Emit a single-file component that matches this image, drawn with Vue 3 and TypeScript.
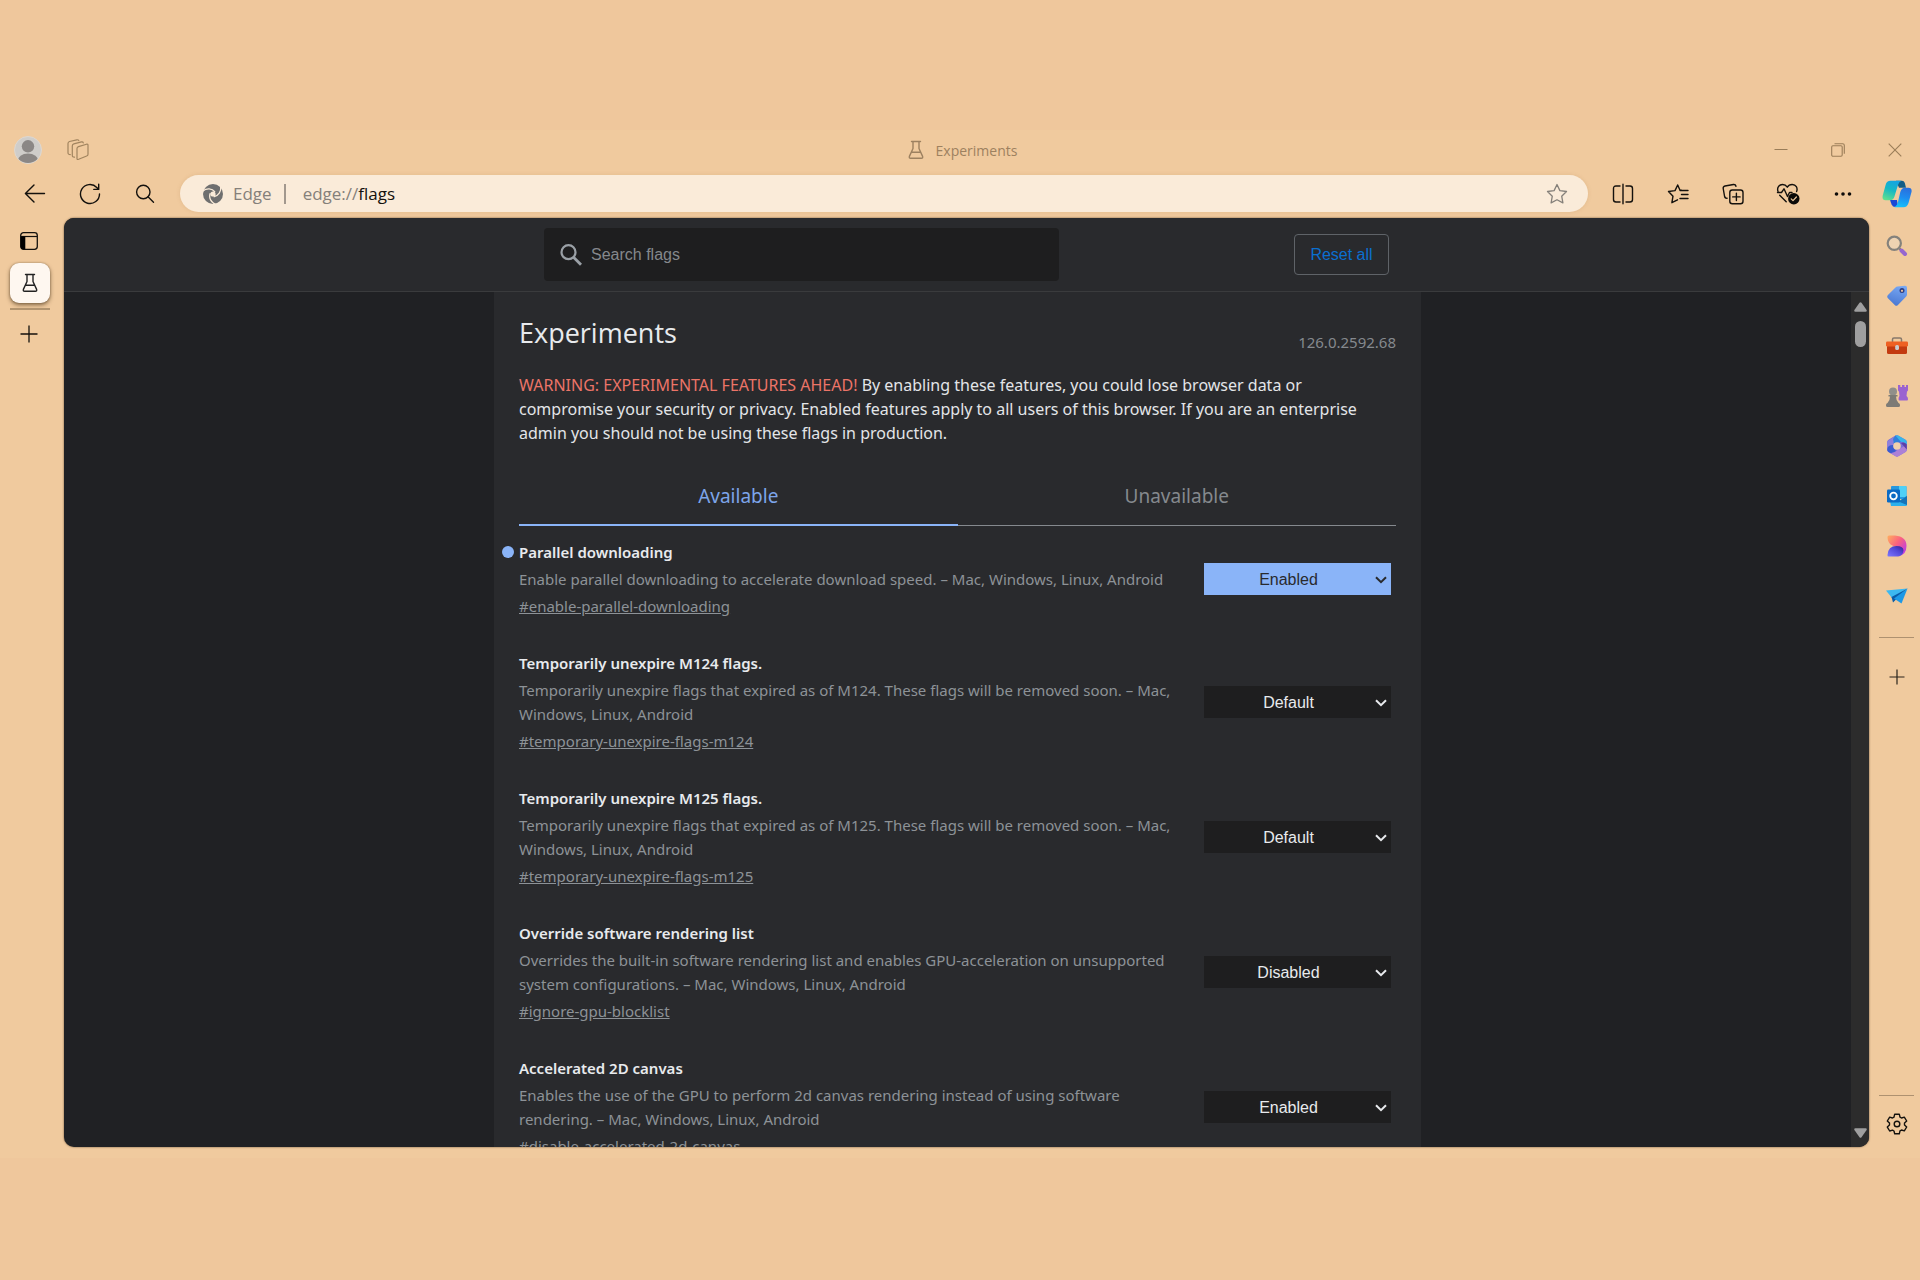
<script setup lang="ts">
import { ref } from 'vue'

type State = 'Default' | 'Enabled' | 'Disabled'

interface Flag {
  id: string
  title: string
  description: string
  state: State
  modified?: boolean
}

const states: State[] = ['Default', 'Enabled', 'Disabled']

const flags = ref<Flag[]>([
  {
    id: 'enable-parallel-downloading',
    title: 'Parallel downloading',
    description: 'Enable parallel downloading to accelerate download speed. – Mac, Windows, Linux, Android',
    state: 'Enabled',
    modified: true,
  },
  {
    id: 'temporary-unexpire-flags-m124',
    title: 'Temporarily unexpire M124 flags.',
    description: 'Temporarily unexpire flags that expired as of M124. These flags will be removed soon. – Mac, Windows, Linux, Android',
    state: 'Default',
  },
  {
    id: 'temporary-unexpire-flags-m125',
    title: 'Temporarily unexpire M125 flags.',
    description: 'Temporarily unexpire flags that expired as of M125. These flags will be removed soon. – Mac, Windows, Linux, Android',
    state: 'Default',
  },
  {
    id: 'ignore-gpu-blocklist',
    title: 'Override software rendering list',
    description: 'Overrides the built-in software rendering list and enables GPU-acceleration on unsupported system configurations. – Mac, Windows, Linux, Android',
    state: 'Disabled',
  },
  {
    id: 'disable-accelerated-2d-canvas',
    title: 'Accelerated 2D canvas',
    description: 'Enables the use of the GPU to perform 2d canvas rendering instead of using software rendering. – Mac, Windows, Linux, Android',
    state: 'Enabled',
  },
])

const query = ref('')
const tab = ref<'available' | 'unavailable'>('available')
</script>

<template>
  <div class="desktop">
    <div class="window">
      <header class="titlebar">
        <div class="title-left">
          <button class="plain" aria-label="Profile">
            <svg width="28" height="28" viewBox="0 0 28 28">
              <defs><clipPath id="avatar"><circle cx="14" cy="14" r="13" /></clipPath></defs>
              <circle cx="14" cy="14" r="13.5" fill="#cfcdca" stroke="#dfd8cf" />
              <g clip-path="url(#avatar)" fill="#8b8785">
                <circle cx="14" cy="10.300" r="6.200" />
                <ellipse cx="14" cy="25.500" rx="10.500" ry="8" />
              </g>
            </svg>
          </button>
          <button class="plain" aria-label="Workspaces">
            <svg width="22" height="22" viewBox="0 0 22 22" fill="none" stroke="#a1845f" stroke-width="1.200" stroke-linejoin="round" stroke-linecap="round">
              <path d="M11.500 7.600 19.500 5.200Q21 4.900 21 6.300V15.200Q21 16.600 19.700 17L11.600 20.300Q10 20.900 10 19.400V9.600Q10 8.100 11.500 7.600Z" />
              <path d="M7.500 18.200Q5.300 18.300 5.300 16.600V7Q5.300 5.400 6.800 4.900L14.500 2.900Q16 2.600 16.300 3.800" />
              <path d="M3.300 15.600Q1 15.600 1 13.800V4.500Q1 3 2.500 2.500L9.800.800Q11.300.500 11.800 1.500" />
            </svg>
          </button>
        </div>
        <div class="title-center">
          <svg width="16" height="20" viewBox="0 0 16 20" fill="none" stroke="#9d8160" stroke-width="1.400" stroke-linecap="round" stroke-linejoin="round">
            <path d="M3.500 1.500h9M5 1.500v7L1.400 16.400Q.900 18.300 2.600 18.300H13.400Q15.100 18.300 14.600 16.400L11 8.500v-7M3.600 12.300h8.800" />
          </svg>
          <span>Experiments</span>
        </div>
        <div class="title-right">
          <button class="plain" aria-label="Minimize">
            <svg width="14" height="14" viewBox="0 0 14 14"><path d="M.500 6.500h13" stroke="#9a7d58" /></svg>
          </button>
          <button class="plain" aria-label="Restore">
            <svg width="14" height="14" viewBox="0 0 14 14" fill="none" stroke="#9a7d58" stroke-width="1.100">
              <rect x=".700" y="2.800" width="10.500" height="10.500" rx="1.200" /><path d="M3.500.700h8.200q1.600 0 1.600 1.600v8.500" />
            </svg>
          </button>
          <button class="plain" aria-label="Close">
            <svg width="14" height="14" viewBox="0 0 14 14"><path d="M.700.700l12.600 12.600M13.300.700.700 13.300" stroke="#9a7d58" stroke-width="1.100" /></svg>
          </button>
        </div>
      </header>

      <div class="toolbar">
        <button class="tool" aria-label="Back">
          <svg width="22" height="22" viewBox="0 0 22 22" class="line"><path d="M20.500 10.500H1.500M10 2 1.400 10.500 10 19" /></svg>
        </button>
        <button class="tool" aria-label="Refresh">
          <svg width="22" height="22" viewBox="0 0 22 22" class="line"><path d="M20.500 11A9.500 9.500 0 1 1 17.800 4.400L19.500 6.200M19.700 1.300V6.400H14.800" /></svg>
        </button>
        <button class="tool" aria-label="Search">
          <svg width="20" height="20" viewBox="0 0 20 20" class="line"><circle cx="8.300" cy="8" r="6.700" /><path d="M13 12.800 18.500 18.300" /></svg>
        </button>
        <div class="omnibox">
          <svg width="20" height="20" viewBox="0 0 20 20">
            <circle cx="10" cy="10" r="10" fill="#6f6f6f" />
            <g fill="none" stroke="#faebd9" stroke-width="1.300">
              <path d="M-.500 7.200C3.500 4 9 4.200 12 8" />
              <path d="M-.500 7.200C3.500 4 9 4.200 12 8" transform="rotate(120 10 10)" />
              <path d="M-.500 7.200C3.500 4 9 4.200 12 8" transform="rotate(240 10 10)" />
            </g>
            <circle cx="10" cy="10" r="2.600" fill="#faebd9" />
          </svg>
          <span class="site">Edge</span>
          <span class="bar"></span>
          <span class="url">edge://<b>flags</b></span>
          <button class="plain star" aria-label="Add to favorites">
            <svg width="22" height="22" viewBox="0 0 22 22" fill="none" stroke="#85807a" stroke-width="1.300" stroke-linejoin="round">
              <path d="M11 1.500 13.900 7.600 20.500 8.500 15.700 13.200 16.900 19.900 11 16.700 5.100 19.900 6.300 13.200 1.500 8.500 8.100 7.600Z" />
            </svg>
          </button>
        </div>
        <button class="tool" aria-label="Split screen">
          <svg width="22" height="22" viewBox="0 0 22 22" class="line"><path d="M8 3H4Q1.500 3 1.500 5.500v11Q1.500 19 4 19H8M14 3h4q2.500 0 2.500 2.500v11Q20.500 19 18 19H14M11 1.200v19.600" /></svg>
        </button>
        <button class="tool" aria-label="Favorites">
          <svg width="22" height="22" viewBox="0 0 22 22" class="line"><path d="M14.500 7.200 12.900 7 10.700 2 8 7.600 1.500 8.500 6 13.200 4.900 19.700 10.500 16.800M13 7.500h8M14.500 11.500H21M13 15.500h8" /></svg>
        </button>
        <button class="tool" aria-label="Collections">
          <svg width="22" height="22" viewBox="0 0 22 22" class="line"><path d="M5 15.300 3.800 15Q2.800 14.500 2.600 13.500L1.200 5.500Q1 3.500 3 3L11.500 1.500Q13.500 1.300 14 3.200" /><rect x="7.800" y="7" width="13.200" height="13.700" rx="2.500" /><path d="M14.400 10.200v7.400M10.700 13.900h7.400" /></svg>
        </button>
        <button class="tool" aria-label="Browser essentials">
          <svg width="24" height="22" viewBox="0 0 24 22" class="line"><path d="M2 8.500C.600 4 3.500 1.500 6.500 1.500 9 1.500 10.500 3 11.300 4.200 12 3 13.700 1.500 16.200 1.500 20 1.500 22 5 20.600 8.500M1.500 9.500h4L8 5.800 11.500 13.500 13.500 9.500H16M3.700 12.300 10.200 18.800" /><circle cx="17.800" cy="15.700" r="5.700" fill="#0b0a08" stroke="none" /><path d="M15.200 15.900 17 17.600 20.400 14" stroke="#f0ca9e" stroke-width="1.200" /></svg>
        </button>
        <button class="tool" aria-label="Settings and more">
          <svg width="18" height="6" viewBox="0 0 18 6" fill="#0e0c0a"><circle cx="2.500" cy="3" r="1.800" /><circle cx="9" cy="3" r="1.800" /><circle cx="15.500" cy="3" r="1.800" /></svg>
        </button>
        <button class="tool copilot" aria-label="Copilot">
          <svg width="30" height="28" viewBox="0 0 30 28">
            <defs>
              <linearGradient id="cpA" x1=".6" y1="0" x2=".2" y2="1"><stop offset="0" stop-color="#13a4e2" /><stop offset=".45" stop-color="#15b8c4" /><stop offset="1" stop-color="#63e08c" /></linearGradient>
              <linearGradient id="cpB" x1=".6" y1="0" x2=".4" y2="1"><stop offset="0" stop-color="#2b6fdc" /><stop offset=".5" stop-color="#1d8df0" /><stop offset="1" stop-color="#17c0fa" /></linearGradient>
            </defs>
            <path d="M14 .800h6Q22 .800 22.800 3L24 7.800H17Z" fill="#135d86" />
            <path d="M8 20h7l1 7h-2.500Q10.500 27 9.600 24.500Z" fill="#1848d6" />
            <path d="M8.500.800H19.500Q17 1.500 16 5L12.300 17Q11 20.300 8 20.300H3.500Q0 20.300 .600 16L3.600 5Q4.700 .800 8.500.800Z" fill="url(#cpA)" />
            <path d="M21.500 27.200H12.500Q15 26 16 22L18.300 12Q19.500 7.700 23 7.700H26.500Q30.300 7.700 29.500 12L26.500 23Q25.300 27.200 21.500 27.200Z" fill="url(#cpB)" />
          </svg>
        </button>
      </div>

      <div class="body">
        <nav class="rail-left" aria-label="Tabs">
          <button class="plain narrow" aria-label="Tab actions">
            <svg width="18" height="18" viewBox="0 0 18 18"><rect x=".700" y=".700" width="16.600" height="16.600" rx="2.800" fill="none" stroke="#14110d" stroke-width="1.300" /><path d="M1 4.500H17" stroke="#14110d" stroke-width="1.200" /><path d="M.700 4.500h4.600v12.800H3q-2.300 0-2.300-2.300z" fill="#000" /></svg>
          </button>
          <button class="tab-tile" aria-label="Experiments">
            <svg width="16" height="20" viewBox="0 0 16 20" fill="none" stroke="#222" stroke-width="1.400" stroke-linecap="round" stroke-linejoin="round">
              <path d="M3.500 1.500h9M5 1.500v7L1.400 16.400Q.900 18.300 2.600 18.300H13.400Q15.100 18.300 14.600 16.400L11 8.500v-7M3.600 12.300h8.800" />
            </svg>
          </button>
          <span class="rail-rule"></span>
          <button class="plain narrow" aria-label="New tab">
            <svg width="18" height="18" viewBox="0 0 18 18"><path d="M9 .500v17M.500 9h17" stroke="#14110d" stroke-width="1.300" /></svg>
          </button>
        </nav>

        <main class="page">
          <div class="page-head">
            <div class="head-inner">
              <label class="search">
                <svg width="24" height="24" viewBox="0 0 24 24" fill="none" stroke="#9aa0a6" stroke-width="2.200"><circle cx="9.500" cy="9.200" r="7" /><path d="M14.500 14.200 22 21.700" stroke-width="2.800" /></svg>
                <input v-model="query" type="text" placeholder="Search flags" aria-label="Search flags" />
              </label>
              <button class="reset">Reset all</button>
            </div>
          </div>
          <div class="scroll">
            <div class="gutter">
              <div class="column">
                <div class="heading">
                  <h1>Experiments</h1>
                  <span class="version">126.0.2592.68</span>
                </div>
                <p class="blurb">
                  <span class="warning">WARNING: EXPERIMENTAL FEATURES AHEAD!</span> By enabling these features, you could lose browser data or<br>compromise your security or privacy. Enabled features apply to all users of this browser. If you are an enterprise<br>admin you should not be using these flags in production.
                </p>
                <div class="tabs" role="tablist">
                  <button role="tab" :aria-selected="tab === 'available'" :class="{ active: tab === 'available' }" @click="tab = 'available'">Available</button>
                  <button role="tab" :aria-selected="tab === 'unavailable'" :class="{ active: tab === 'unavailable' }" @click="tab = 'unavailable'">Unavailable</button>
                </div>
                <section v-for="flag in flags" :key="flag.id" class="flag" :class="{ modified: flag.modified }">
                  <div class="info">
                    <h2><label :for="flag.id">{{ flag.title }}</label></h2>
                    <p>{{ flag.description }}</p>
                    <a :href="'#' + flag.id">#{{ flag.id }}</a>
                  </div>
                  <div class="choice">
                    <select :id="flag.id" v-model="flag.state">
                      <option v-for="s in states" :key="s">{{ s }}</option>
                    </select>
                    <svg width="12" height="8" viewBox="0 0 12 8" fill="none" stroke="currentColor" stroke-width="2"><path d="M1 1.200 6 6.200 11 1.200" /></svg>
                  </div>
                </section>
              </div>
            </div>
            <div class="scrollbar">
              <svg width="13" height="10" viewBox="0 0 13 10"><path d="M5.500.800Q6.500-.200 7.500.800L12.600 8Q13.200 9.600 11.600 9.700H1.400Q-.200 9.600.400 8Z" fill="#9f9f9f" /></svg>
              <span class="thumb"></span>
              <svg width="13" height="10" viewBox="0 0 13 10"><path d="M5.500 9.200Q6.500 10.200 7.500 9.200L12.600 2Q13.200.400 11.600.300H1.400Q-.200.400.400 2Z" fill="#9f9f9f" /></svg>
            </div>
          </div>
        </main>

        <aside class="rail-right" aria-label="Sidebar">
          <button class="app" aria-label="Search">
            <svg width="22" height="22" viewBox="0 0 22 22"><path d="M13.500 13.500 16 16" stroke="#77736e" stroke-width="2" /><circle cx="8.300" cy="8.300" r="6.600" fill="#eed3b2" stroke="#85827c" stroke-width="2.200" /><path d="M15.500 15.500 19 19" stroke="#9666cf" stroke-width="4" stroke-linecap="round" /></svg>
          </button>
          <button class="app" aria-label="Shopping">
            <svg width="22" height="22" viewBox="0 0 22 22"><defs><linearGradient id="tag" x1=".7" y1="0" x2=".4" y2="1"><stop offset="0" stop-color="#78a8f4" /><stop offset="1" stop-color="#4a78d2" /></linearGradient></defs><path d="M11.500 1.500 19 .800Q21 .800 21 2.800V9.500Q21 10.700 20.200 11.500L11.700 20.300Q10.300 21.400 9 20.300L1.700 13Q.600 11.700 1.700 10.300L9.500 2.500Q10.300 1.600 11.500 1.500Z" fill="url(#tag)" /><circle cx="16" cy="5.500" r="2.500" fill="#2e3f83" /><circle cx="16" cy="5.800" r="1.100" fill="#edc7a4" /></svg>
          </button>
          <button class="app" aria-label="Tools">
            <svg width="22" height="20" viewBox="0 2 22 18"><path d="M6.500 7V4.500Q6.500 3 8 3h6Q15.500 3 15.500 4.500V7" fill="none" stroke="#87786b" stroke-width="1.500" /><rect x="1" y="10" width="20" height="9" rx="1.500" fill="#c33a10" /><rect x="0" y="6.500" width="22" height="5" rx="1.300" fill="#ee6023" /><rect x="9.200" y="10" width="3.800" height="5" rx="1.600" fill="#c9ccd0" /></svg>
          </button>
          <button class="app" aria-label="Games">
            <svg width="22" height="24" viewBox="0 0 22 24"><path d="M12 1h2.300v2H16V1h2.500v2H20V1h2v5q0 1-1 1.500L20.500 12q1.500 1 1.500 3 0 1.500-1 1.500H13.500q-1 0-1-1.500 0-1.800 1-3L13 7.500q-1-.500-1-1.500Z" fill="#9a63d0" /><circle cx="7" cy="7.500" r="4" fill="#918f8a" /><path d="M2.500 11h9v1.500H10q0 4 2.500 6.500 1.500.500 1.500 2v.500q0 1.500-1.500 1.500H1.500Q0 23 0 21.500V21q0-1.500 1.500-2Q4 16.500 4 12.500H2.500Z" fill="#7d7b76" /></svg>
          </button>
          <button class="app" aria-label="Microsoft 365">
            <svg width="22" height="22" viewBox="0 0 22 22">
              <path d="M11.500.300 19.500 4.700Q20.800 5.500 20.800 7V14.800Q20.800 16.300 19.500 17L12.300 21.300Q11 22 9.700 21.300L2.500 17Q1.200 16.300 1.200 14.800V7Q1.200 5.500 2.500 4.700L9.500.600Q10.500 0 11.500.300Z" fill="#7a6ed8" />
              <path d="M7 2.500 1.200 6.500V15L7.500 11V7.500L11 .200Z" fill="#8f7fdb" />
              <path d="M9.500.600Q11-.200 12.300.600L19.500 4.700Q20.800 5.500 20.800 7V10Q18 6.500 14 6.700L7.500 8Z" fill="#38b4ea" />
              <path d="M7 4 9.500.600 15 7 8 8.500Z" fill="#2f7fdc" />
              <path d="M1.200 14.800Q1.200 10 7 10L9 15 12 17 6 19 2.500 17Q1.200 16.300 1.200 14.800Z" fill="#3b5cd0" />
              <path d="M4.500 18.200Q9 17.500 14 13.500L20.800 10V14.800Q20.800 16.300 19.500 17L12.300 21.300Q11 22 9.700 21.300Z" fill="#ac80d6" />
              <path d="M15 8 20.800 14.500V9.500Q18.500 6.500 15 8Z" fill="#5b3fa8" />
              <circle cx="11" cy="11" r="3.800" fill="#f0d0ac" />
            </svg>
          </button>
          <button class="app" aria-label="Outlook">
            <svg width="22" height="22" viewBox="0 0 22 22"><rect x="5" y="1" width="15.500" height="13" rx="1" fill="#2798df" /><path d="M13 1h6.500q1 0 1 1v10H13Z" fill="#4fd0f6" /><path d="M3 11 12.500 16.500 21 10.500V20q0 1-1 1H5Z" fill="#2bb0ec" /><path d="M12.500 16.500 21 11v9Z" fill="#1573b8" /><rect x="1" y="4.500" width="13" height="13" rx="1.300" fill="#0a6ac4" /><circle cx="7.500" cy="11" r="3.300" fill="none" stroke="#fff" stroke-width="1.800" /></svg>
          </button>
          <button class="app" aria-label="Image Creator">
            <svg width="22" height="22" viewBox="0 0 22 22"><defs><linearGradient id="dsA" x1="0" y1="0" x2="1" y2=".8"><stop offset="0" stop-color="#ffae5e" /><stop offset=".5" stop-color="#fb617f" /><stop offset="1" stop-color="#b837f0" /></linearGradient><linearGradient id="dsB" x1="0" y1="1" x2="1" y2="0"><stop offset="0" stop-color="#7d78ff" /><stop offset=".6" stop-color="#5146d6" /><stop offset="1" stop-color="#352088" /></linearGradient></defs><path d="M1.500 2Q1.500.500 3 .500H9Q20.500 1.500 20.500 11T11.500 21.500L14 12Q1.500 12 1.500 2Z" fill="url(#dsA)" /><path d="M2.500 21.500q-1.200 0-1-1.500Q2 11 10.500 11 17.500 11 17.500 15.500 17 21.500 10.500 21.500Z" fill="url(#dsB)" /></svg>
          </button>
          <button class="app" aria-label="Drop">
            <svg width="22" height="22" viewBox="0 0 22 22"><path d="M0 5.500 21.500 3.500 6 13Z" fill="#3cb8f0" /><path d="M21.500 3.500 5.500 12 7 17.500 10 14.500Z" fill="#0a5ca8" /><path d="M21.500 3.500 15.500 18.500 8 13.500Z" fill="#1c98e6" /></svg>
          </button>
          <span class="divider"></span>
          <button class="plain add" aria-label="Customize">
            <svg width="16" height="16" viewBox="0 0 16 16"><path d="M8 .500v15M.500 8h15" stroke="#2a231b" stroke-width="1.200" /></svg>
          </button>
          <span class="spacer"></span>
          <span class="divider"></span>
          <button class="app gear" aria-label="Settings">
            <svg width="22" height="22" viewBox="0 0 22 22" class="line"><path d="M8.700 1.200h4.600l.700 2.900 1.500.900 2.800-.900 2.400 3.900-2.200 2v2l2.200 2-2.400 3.900-2.800-.900-1.500.900-.700 2.900H8.700L8 18l-1.500-.900-2.800.900L1.300 14.100l2.200-2v-2L1.300 8l2.400-3.900 2.800.900L8 4.100Z" /><circle cx="11" cy="11" r="2.800" /></svg>
          </button>
        </aside>
      </div>
    </div>
  </div>
</template>

<style>
body {
  background: #efc79c;
}
</style>

<style scoped>
* {
  box-sizing: border-box;
}
.desktop {
  height: 100vh;
  min-height: 640px;
  padding: 130px 0 122px;
  background: #efc79c;
  font-family: "Open Sans", "Noto Sans", sans-serif;
}
.window {
  height: 100%;
  display: flex;
  flex-direction: column;
  background: #f0ca9e;
}
button {
  font: inherit;
  border: 0;
  padding: 0;
  background: none;
}
svg {
  display: block;
  flex: none;
}
.line {
  fill: none;
  stroke: #14110d;
  stroke-width: 1.4;
  stroke-linecap: round;
  stroke-linejoin: round;
}
.plain {
  display: flex;
  align-items: center;
  justify-content: center;
}
.titlebar {
  display: grid;
  grid-template-columns: 1fr auto 1fr;
  align-items: center;
  height: 40px;
  color: #9d8160;
  font-size: 14px;
}
.title-left {
  display: flex;
  gap: 25px;
  padding-left: 14px;
}
.title-center {
  display: flex;
  align-items: center;
  gap: 12px;
  padding-left: 5px;
}
.title-right {
  display: flex;
  justify-content: flex-end;
  gap: 33px;
  padding-right: 13px;
}
.title-right .plain {
  width: 24px;
  height: 24px;
}
.toolbar {
  display: flex;
  align-items: center;
  height: 47px;
  margin-bottom: 1px;
  padding-left: 7px;
}
.tool {
  width: 55px;
  height: 36px;
  display: flex;
  align-items: center;
  justify-content: center;
}
.copilot {
  width: 50px;
  padding-left: 4px;
}
.omnibox {
  flex: 1;
  display: flex;
  align-items: center;
  height: 37px;
  margin: 0 7px 0 8px;
  padding: 0 20px 0 23px;
  border-radius: 19px;
  background: #faebd9;
  box-shadow: 0 0 4px rgba(150, 100, 50, 0.15);
  color: #85807a;
  font-size: 17px;
}
.site {
  margin-left: 10px;
}
.bar {
  width: 2px;
  height: 20px;
  margin: 0 17px 0 12px;
  background: #a2988e;
}
.url b {
  font-weight: 400;
  color: #14110d;
}
.star {
  margin-left: auto;
}
.body {
  flex: 1;
  min-height: 0;
  display: flex;
  padding-bottom: 11px;
}
.rail-left {
  width: 64px;
  padding: 14px 14px 0 10px;
  display: flex;
  flex-direction: column;
  align-items: center;
}
.narrow {
  width: 40px;
  padding-right: 2px;
}
.tab-tile {
  width: 40px;
  height: 40px;
  margin-top: 13px;
  display: flex;
  align-items: center;
  justify-content: center;
  flex: none;
  border-radius: 9px;
  background: #fef7f0;
  box-shadow: 0 2px 4px rgba(60, 40, 15, 0.6), 0 0 2px rgba(60, 40, 15, 0.4);
}
.rail-rule {
  width: 40px;
  height: 2px;
  margin: 5px 0 15px;
  background: #b2946f;
}
.page {
  flex: 1;
  min-width: 0;
  display: flex;
  flex-direction: column;
  overflow: hidden;
  border-radius: 10px;
  background: #202124;
  box-shadow: 0 0 2px rgba(60, 40, 20, 0.8);
}
.page-head {
  flex: none;
  height: 74px;
  background: #292a2d;
  border-bottom: 1px solid #3a3b3d;
}
.head-inner {
  max-width: 845px;
  height: 100%;
  margin: 0 auto;
  display: flex;
  align-items: center;
  justify-content: space-between;
  font-family: "Liberation Sans", Arial, sans-serif;
}
.search {
  width: 515px;
  height: 53px;
  padding: 0 15px;
  display: flex;
  align-items: center;
  gap: 8px;
  border-radius: 4px;
  background: #1e1e1f;
}
.search input {
  flex: 1;
  border: 0;
  padding: 0;
  outline: 0;
  background: none;
  color: #e8eaed;
  font: 16px "Liberation Sans", Arial, sans-serif;
}
.search input::placeholder {
  color: #85888c;
  opacity: 1;
}
.reset {
  width: 95px;
  height: 41px;
  border: 1px solid #5f6368;
  border-radius: 4px;
  color: #0b6fd0;
  font-size: 16px;
}
.scroll {
  flex: 1;
  min-height: 0;
  display: flex;
}
.gutter {
  flex: 1;
  min-width: 0;
  overflow: hidden;
}
.column {
  max-width: 927px;
  min-height: 100%;
  margin: 0 auto;
  padding: 21px 25px 0;
  background: #292a2d;
  font-family: "Noto Sans", "Open Sans", sans-serif;
}
.heading {
  display: flex;
  justify-content: space-between;
  align-items: flex-end;
}
h1 {
  margin: 0;
  color: #e8eaed;
  font-family: "Open Sans", "Noto Sans", sans-serif;
  font-size: 27px;
  font-weight: 400;
  line-height: 40px;
}
.version {
  color: #85898e;
  font-size: 15px;
  line-height: 22px;
}
.blurb {
  margin: 20px 0 0;
  color: #e3e5e8;
  font-size: 16px;
  line-height: 24px;
  white-space: nowrap;
}
.warning {
  color: #ec7468;
}
.tabs {
  display: flex;
  height: 59px;
  margin: 22px 0 14px;
}
.tabs button {
  flex: 1;
  border-bottom: 1px solid #85898e;
  color: #85898e;
  font-size: 19px;
}
.tabs .active {
  border-bottom: 2px solid #8ab4f8;
  color: #7da5ea;
}
.flag {
  display: flex;
  align-items: center;
  justify-content: space-between;
  margin-bottom: 33px;
  padding-right: 5px;
}
.info {
  width: 670px;
  position: relative;
  color: #8d9297;
  font-size: 15px;
  line-height: 24px;
}
.modified .info::before {
  content: "";
  position: absolute;
  left: -17px;
  top: 6px;
  width: 12px;
  height: 12px;
  border-radius: 50%;
  background: #8ab4f8;
}
h2 {
  margin: 0;
  color: #e8eaed;
  font-size: 15px;
  font-weight: 600;
  line-height: 24px;
}
.info p {
  margin: 3px 0;
}
.info a {
  display: block;
  width: fit-content;
  color: inherit;
  text-decoration: underline;
}
.choice {
  position: relative;
  width: 187px;
  color: #e8eaed;
}
.choice select {
  display: block;
  width: 100%;
  height: 32px;
  appearance: none;
  border: 0;
  border-radius: 0;
  padding: 0 18px 0 0;
  background: #1e1e1f;
  color: inherit;
  font: 16px "Liberation Sans", Arial, sans-serif;
  text-align: center;
  text-align-last: center;
}
.choice svg {
  position: absolute;
  right: 4px;
  top: 13px;
  pointer-events: none;
}
.modified .choice {
  color: #292a2d;
}
.modified select {
  background: #8ab4f8;
}
.scrollbar {
  width: 18px;
  padding: 10px 0 9px;
  display: flex;
  flex-direction: column;
  align-items: center;
  background: #2c2c2c;
}
.thumb {
  width: 11px;
  height: 26px;
  margin: 9px 0 auto;
  border-radius: 6px;
  background: #9f9f9f;
}
.rail-right {
  width: 51px;
  padding: 3px 0 0 4px;
  display: flex;
  flex-direction: column;
  align-items: center;
}
.app {
  width: 44px;
  height: 50px;
  display: flex;
  align-items: center;
  justify-content: center;
}
.divider {
  width: 35px;
  height: 1px;
  margin-top: 16px;
  background: #ae9170;
}
.add {
  width: 44px;
  height: 78px;
}
.spacer {
  flex: 1;
}
.gear {
  align-items: flex-end;
  height: 51px;
  padding-bottom: 12px;
}
</style>
